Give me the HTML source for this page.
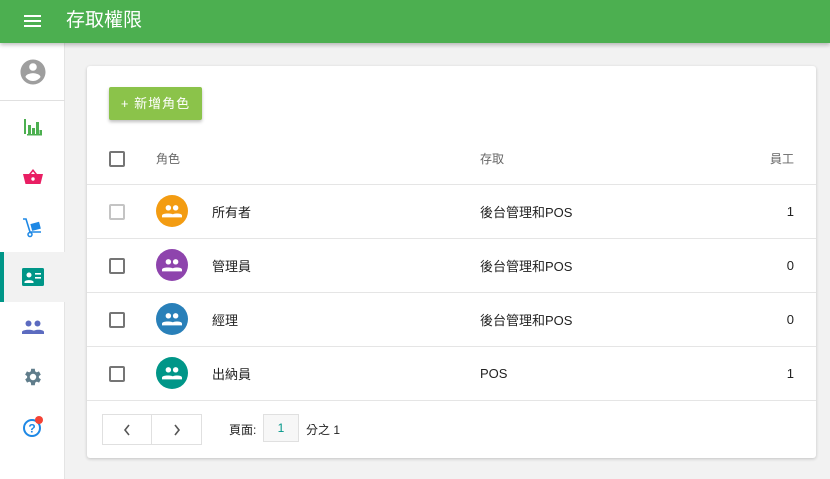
<!DOCTYPE html>
<html><head><meta charset="utf-8"><style>
*{margin:0;padding:0;box-sizing:border-box}
body{width:830px;height:479px;overflow:hidden;background:#f2f2f2;font-family:"Liberation Sans","Noto Sans CJK TC",sans-serif;position:relative;font-size:13px;color:#222}
.hdr{position:absolute;left:0;top:0;width:830px;height:43px;background:#4caf50;box-shadow:0 2px 4px rgba(0,0,0,.25);z-index:2}
.hdr .t{position:absolute;left:66px;top:0;line-height:42px;color:#fff;font-size:19px}
.side{position:absolute;left:0;top:43px;width:65px;height:436px;background:#fff;border-right:1px solid #e4e4e4}
.ic{position:absolute;left:0;width:65px;height:50px;display:flex;align-items:center;justify-content:center}
.card{position:absolute;left:87px;top:66px;width:729px;height:392px;background:#fff;border-radius:3px;box-shadow:0 1px 3px rgba(0,0,0,.2)}
.btn{position:absolute;left:22px;top:21px;width:93px;height:33px;background:#8bc34a;color:#fff;font-size:13px;line-height:33px;text-align:center;border-radius:2px;box-shadow:0 2px 3px rgba(0,0,0,.25);letter-spacing:1px}
.row{position:absolute;left:0;width:729px;border-bottom:1px solid #e5e5e5}
.cb{position:absolute;left:22px;width:16px;height:16px;border:2px solid #757575;border-radius:2px}
.av{position:absolute;left:69px;width:32px;height:32px;border-radius:50%;display:flex;align-items:center;justify-content:center}
.c{position:absolute;font-size:13px;top:0;height:100%;display:flex;align-items:center}
</style></head><body>
<div class="hdr">
<svg style="position:absolute;left:24px;top:15px" width="17" height="13"><rect y="0" width="17" height="2" fill="#fff"/><rect y="5" width="17" height="2" fill="#fff"/><rect y="10" width="17" height="2" fill="#fff"/></svg>
<div class="t">存取權限</div></div>
<div class="side">
<div class="ic" style="top:4px;height:50px"><svg width="30" height="30" viewBox="0 0 24 24"><path fill="#9e9e9e" d="M12 2C6.5 2 2 6.5 2 12s4.5 10 10 10 10-4.5 10-10S17.5 2 12 2zm0 3c1.7 0 3 1.3 3 3s-1.3 3-3 3-3-1.3-3-3 1.3-3 3-3zm0 14.2c-2.5 0-4.7-1.3-6-3.2 0-2 4-3.1 6-3.1s6 1.1 6 3.1c-1.3 1.9-3.5 3.2-6 3.2z"/></svg></div>
<div style="position:absolute;top:57px;left:0;width:65px;height:1px;background:#e0e0e0"></div>
<div class="ic" style="top:59px"><svg width="20" height="18"><path fill="#4caf50" d="M1 1h2v15h-2zM4 16h15v1.5H4zM5 7h3v9H5zM9 10h3v6H9zM13 4h3v12h-3zM16.5 12h2.5v4h-2.5z"/></svg></div>
<div class="ic" style="top:109px"><svg width="22" height="18" viewBox="0 0 22 18"><path fill="#e91e63" d="M7 6L11 1l4 5h6l-2.5 10H3.5L1 6zM9 6h4l-2-2.5z"/><circle cx="11" cy="11" r="1.7" fill="#fff"/></svg></div>
<div class="ic" style="top:159px"><svg width="22" height="22" viewBox="0 0 22 22"><path fill="none" stroke="#1e88e5" stroke-width="1.6" d="M1 3h3l4 13h11"/><rect x="9" y="7" width="9" height="7" fill="#1e88e5" transform="rotate(-15 13 10)"/><circle cx="8" cy="18.5" r="2" fill="none" stroke="#1e88e5" stroke-width="1.5"/></svg></div>
<div class="ic" style="top:209px;background:#f2f2f2"><div style="position:absolute;left:0;top:0;width:4px;height:50px;background:#009688"></div><svg width="22" height="18"><rect width="22" height="18" rx="1.5" fill="#009688"/><circle cx="7" cy="7" r="2.5" fill="#fff"/><path fill="#fff" d="M2.5 14c0-2.5 9-2.5 9 0v1h-9z"/><rect x="13" y="5" width="6" height="1.6" fill="#fff"/><rect x="13" y="9" width="6" height="1.6" fill="#fff"/></svg></div>
<div class="ic" style="top:259px"><svg width="22" height="14" viewBox="0 0 22 14"><circle cx="6.5" cy="3.5" r="3" fill="#5c6bc0"/><circle cx="15.5" cy="3.5" r="3" fill="#5c6bc0"/><path fill="#5c6bc0" d="M0 14v-2c0-3 13-3 13 0v2zM11 14v-2c0-3 11-3 11 0v2z"/></svg></div>
<div class="ic" style="top:309px"><svg width="22" height="22" viewBox="0 0 24 24"><path fill="#607d8b" d="M19.4 13c.04-.3.06-.6.06-1s-.02-.7-.06-1l2.1-1.6-2-3.5-2.5 1c-.5-.4-1.1-.7-1.700-1L15 3h-4l-.4 2.9c-.6.3-1.2.6-1.7 1l-2.5-1-2 3.5L6.6 11c-.04.3-.06.6-.06 1s.02.7.06 1l-2.1 1.6 2 3.5 2.5-1c.5.4 1.1.7 1.7 1L11 21h4l.4-2.9c.6-.3 1.2-.6 1.7-1l2.5 1 2-3.5zM13 15.5a3.5 3.5 0 110-7 3.5 3.5 0 010 7z" transform="translate(-1 0)"/></svg></div>
<div class="ic" style="top:359px"><svg width="24" height="24" viewBox="0 0 24 24"><circle cx="11" cy="13" r="8" fill="none" stroke="#1e88e5" stroke-width="2"/><text x="11" y="17.5" font-size="12" font-weight="bold" text-anchor="middle" fill="#1e88e5" font-family="Liberation Sans">?</text><circle cx="18" cy="5" r="4" fill="#f44336"/></svg></div>
</div>
<div class="card">
<div class="btn">+ 新增角色</div>
<div class="row" style="top:66px;height:53px"><div class="cb" style="top:19px"></div><div class="c" style="left:69px;color:#666;font-size:12px">角色</div><div class="c" style="left:393px;color:#666;font-size:12px">存取</div><div class="c" style="right:22px;color:#666;font-size:12px">員工</div></div>
<div class="row" style="top:119px;height:54px"><div class="cb" style="top:19px;border-color:#c4c4c4"></div><div class="av" style="top:10px;background:#f39c12"><svg width="20" height="14" viewBox="0 0 22 14"><circle cx="7" cy="3.5" r="3" fill="#fff"/><circle cx="15" cy="3.5" r="3" fill="#fff"/><path fill="#fff" d="M0 14v-2c0-3 13-3 13 0v2zM11 14v-2c0-3 11-3 11 0v2z"/></svg></div><div class="c" style="left:125px">所有者</div><div class="c" style="left:393px">後台管理和POS</div><div class="c" style="right:22px">1</div></div>
<div class="row" style="top:173px;height:54px"><div class="cb" style="top:19px"></div><div class="av" style="top:10px;background:#8e44ad"><svg width="20" height="14" viewBox="0 0 22 14"><circle cx="7" cy="3.5" r="3" fill="#fff"/><circle cx="15" cy="3.5" r="3" fill="#fff"/><path fill="#fff" d="M0 14v-2c0-3 13-3 13 0v2zM11 14v-2c0-3 11-3 11 0v2z"/></svg></div><div class="c" style="left:125px">管理員</div><div class="c" style="left:393px">後台管理和POS</div><div class="c" style="right:22px">0</div></div>
<div class="row" style="top:227px;height:54px"><div class="cb" style="top:19px"></div><div class="av" style="top:10px;background:#2980b9"><svg width="20" height="14" viewBox="0 0 22 14"><circle cx="7" cy="3.5" r="3" fill="#fff"/><circle cx="15" cy="3.5" r="3" fill="#fff"/><path fill="#fff" d="M0 14v-2c0-3 13-3 13 0v2zM11 14v-2c0-3 11-3 11 0v2z"/></svg></div><div class="c" style="left:125px">經理</div><div class="c" style="left:393px">後台管理和POS</div><div class="c" style="right:22px">0</div></div>
<div class="row" style="top:281px;height:54px"><div class="cb" style="top:19px"></div><div class="av" style="top:10px;background:#009688"><svg width="20" height="14" viewBox="0 0 22 14"><circle cx="7" cy="3.5" r="3" fill="#fff"/><circle cx="15" cy="3.5" r="3" fill="#fff"/><path fill="#fff" d="M0 14v-2c0-3 13-3 13 0v2zM11 14v-2c0-3 11-3 11 0v2z"/></svg></div><div class="c" style="left:125px">出納員</div><div class="c" style="left:393px">POS</div><div class="c" style="right:22px">1</div></div>
<div style="position:absolute;left:15px;top:348px;width:100px;height:31px;border:1px solid #e0e0e0;display:flex"><div style="width:49px;border-right:1px solid #e0e0e0;display:flex;align-items:center;justify-content:center"><svg width="8" height="12"><path d="M6 1L2 6l4 5" fill="none" stroke="#555" stroke-width="1.6"/></svg></div><div style="flex:1;display:flex;align-items:center;justify-content:center"><svg width="8" height="12"><path d="M2 1l4 5-4 5" fill="none" stroke="#555" stroke-width="1.6"/></svg></div></div>
<div class="c" style="left:142px;top:348px;height:31px;font-size:12px">頁面:</div>
<div style="position:absolute;left:176px;top:348px;width:36px;height:28px;border:1px solid #e0e0e0;background:#f7f7f7;text-align:center;line-height:26px;color:#009688;font-size:12px">1</div>
<div class="c" style="left:219px;top:348px;height:31px;font-size:12px">分之 1</div>
</div>
</body></html>
